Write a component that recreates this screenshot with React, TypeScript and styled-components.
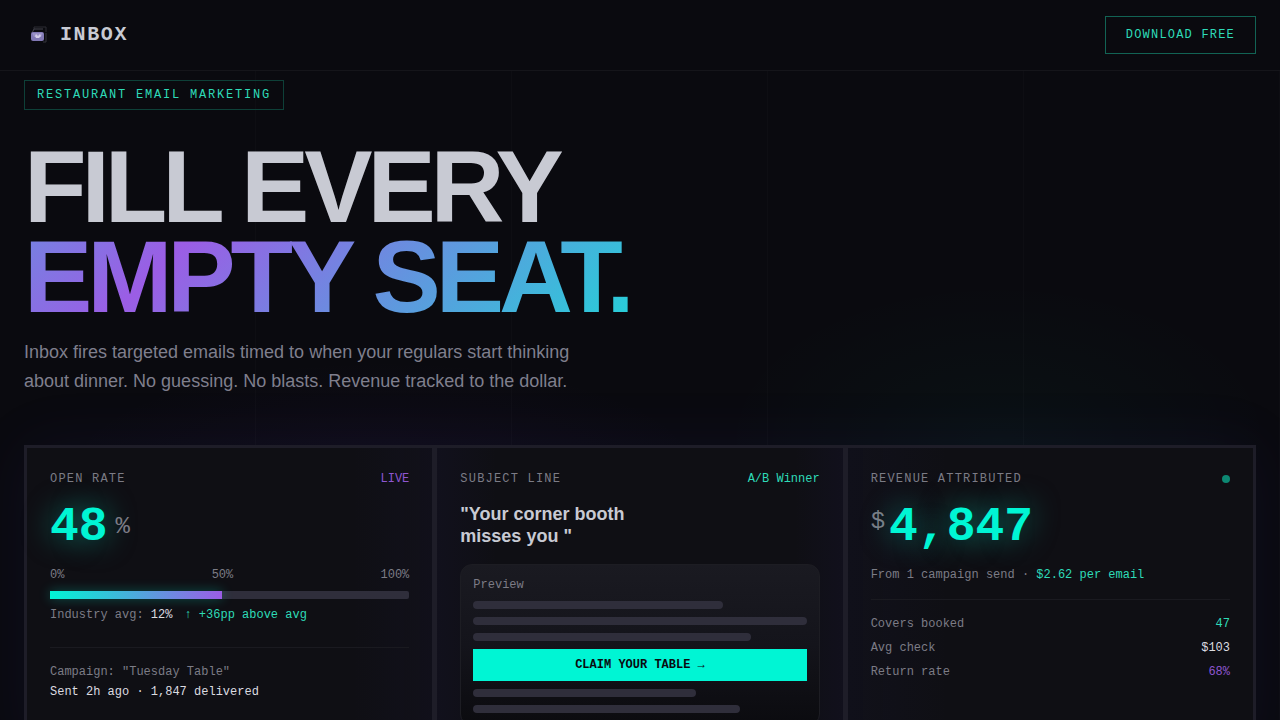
import React from 'react';
import styled, { createGlobalStyle } from 'styled-components';

const mono = '"Liberation Mono", "Courier New", monospace';
const sans = '"Liberation Sans", Arial, sans-serif';

const color = {
  page: '#0a0a0f',
  card: '#0f0f14',
  line: '#1e1d28',
  rule: '#1a1a20',
  track: '#2f2e3b',
  text: '#c8cad3',
  bright: '#dcdce0',
  muted: '#7c7c86',
  cyan: '#00f5d4',
  cyanSoft: '#2edbb8',
  purple: '#9b5de5',
  purpleSoft: '#8e56d0',
};

const GlobalStyle = createGlobalStyle`
  *, *::before, *::after { box-sizing: border-box; }
  body {
    margin: 0;
    background: ${color.page};
    color: ${color.text};
    font-family: ${mono};
    font-size: 12px;
    line-height: 16px;
  }
  h1, h2, p, dl, dd { margin: 0; }
`;

const Page = styled.div`
  min-height: 100vh;
  background:
    repeating-linear-gradient(90deg, transparent 0 calc(20% - 1px), rgba(255, 255, 255, 0.014) calc(20% - 1px) 20%),
    radial-gradient(ellipse 320px 110px at 30% 470px, rgba(120, 60, 200, 0.05), transparent),
    radial-gradient(ellipse 280px 160px at 78% 440px, rgba(0, 245, 180, 0.03), transparent),
    ${color.page};
`;

const Nav = styled.header`
  position: fixed;
  z-index: 1;
  top: 0;
  left: 0;
  right: 0;
  display: flex;
  align-items: center;
  justify-content: space-between;
  padding: 16px 24px;
  border-bottom: 1px solid #15151a;
  background: #0a0a0f;
`;

const Brand = styled.a`
  display: flex;
  align-items: center;
  gap: 8px;
  color: ${color.text};
  font-size: 20px;
  line-height: 24px;
  font-weight: 700;
  letter-spacing: 0.08em;
  text-decoration: none;
`;

const DownloadButton = styled.button`
  padding: 10px 20px;
  border: 1px solid #126354;
  background: transparent;
  color: ${color.cyanSoft};
  font: 12px/16px ${mono};
  letter-spacing: 0.1em;
  cursor: pointer;
`;

const Main = styled.main`
  padding: 80px 24px 48px;
`;

const Hero = styled.section`
  display: flex;
  flex-direction: column;
  align-items: flex-start;
`;

const Tag = styled.p`
  padding: 6px 12px;
  border: 1px solid #0e4038;
  color: ${color.cyanSoft};
  letter-spacing: 0.15em;
`;

const Headline = styled.h1`
  margin-top: 32px;
  font: 700 8vw/90px ${sans};
  letter-spacing: -0.05em;
`;

const Accent = styled.span`
  display: table;
  background: linear-gradient(135deg, ${color.cyan}, ${color.purple}, ${color.cyan}) 79% 50% / 200% 200%;
  -webkit-background-clip: text;
  background-clip: text;
  color: transparent;
`;

const Lead = styled.p`
  max-width: 560px;
  margin-top: 16px;
  color: #7f7f8d;
  font: 18px/29px ${sans};
`;

const Cards = styled.section`
  display: grid;
  grid-template-columns: repeat(3, 1fr);
  gap: 5px;
  margin-top: 49px;
  border: 3px solid ${color.line};
  background: ${color.line};
  box-shadow: 0 0 60px rgba(80, 60, 200, 0.08);
`;

const Card = styled.article<{ $glow: string }>`
  padding: 23px;
  background: ${(p) => p.$glow}, ${color.card};
`;

const CardHead = styled.header`
  display: flex;
  align-items: center;
  justify-content: space-between;
  margin-bottom: 16px;
`;

const Label = styled.h2`
  color: ${color.muted};
  font: 12px/16px ${mono};
  letter-spacing: 0.1em;
`;

const Tone = styled.span<{ $color: string }>`
  color: ${(p) => p.$color};
`;

const StatusDot = styled.span`
  width: 8px;
  height: 8px;
  border-radius: 50%;
  background: #0d8873;
`;

const Figure = styled.div<{ $align: string; $gap: number }>`
  display: flex;
  align-items: ${(p) => p.$align};
  gap: ${(p) => p.$gap}px;
  margin-bottom: 16px;
`;

const Value = styled.strong`
  color: ${color.cyan};
  font-size: 48px;
  line-height: 48px;
  text-shadow: 0 0 30px rgba(0, 245, 212, 0.5);
`;

const Unit = styled.span`
  color: ${color.muted};
  font-size: 24px;
  line-height: 38px;
`;

const Scale = styled.div`
  display: flex;
  justify-content: space-between;
  color: ${color.muted};
`;

const Track = styled.div`
  height: 8px;
  margin: 8px 0;
  border-radius: 2px;
  background: ${color.track};
`;

const Fill = styled.div`
  height: 100%;
  background: linear-gradient(90deg, ${color.cyan}, ${color.purple});
  box-shadow: 0 0 12px rgba(0, 245, 212, 0.3);
`;

const Note = styled.p`
  color: ${color.muted};
`;

const Delta = styled.span`
  margin-left: 12px;
  color: ${color.cyanSoft};
`;

const Campaign = styled.div`
  display: grid;
  gap: 4px;
  margin-top: 24px;
  padding-top: 16px;
  border-top: 1px solid ${color.rule};
`;

const Subject = styled.p`
  margin-bottom: 17px;
  font: 700 18px/22px ${sans};
`;

const Preview = styled.div`
  display: grid;
  gap: 8px;
  padding: 12px;
  border: 1px solid #1d1d23;
  border-radius: 12px;
  background: linear-gradient(180deg, #1a1a21, #14141b 50%, #0b0b0f);
  color: ${color.muted};
`;

const Skeleton = styled.div<{ $width: string }>`
  width: ${(p) => p.$width};
  height: 8px;
  border-radius: 4px;
  background: ${color.track};
`;

const Claim = styled.button`
  padding: 8px;
  border: 0;
  background: ${color.cyan};
  color: ${color.page};
  font: 700 12px/16px ${mono};
  cursor: pointer;
`;

const Metrics = styled.dl`
  display: grid;
  gap: 8px;
  margin-top: 16px;
  padding-top: 16px;
  border-top: 1px solid ${color.rule};
`;

const Metric = styled.div`
  display: flex;
  justify-content: space-between;
  color: ${color.muted};
`;

const MetricValue = styled.dd<{ $color: string }>`
  color: ${(p) => p.$color};
`;

const metrics = [
  { name: 'Covers booked', value: '47', tone: color.cyanSoft },
  { name: 'Avg check', value: '$103', tone: color.bright },
  { name: 'Return rate', value: '68%', tone: color.purpleSoft },
];

const glowRight = 'linear-gradient(90deg, transparent 80%, rgba(60, 40, 180, 0.04))';
const glowBoth = 'linear-gradient(90deg, rgba(60, 40, 180, 0.05), transparent 15% 88%, rgba(60, 40, 180, 0.05))';
const glowLeft = 'linear-gradient(90deg, rgba(50, 50, 180, 0.04), transparent 25%)';

function Logo() {
  return (
    <svg width="28" height="28" viewBox="0 0 28 28" fill="none" aria-hidden="true">
      <path d="M10 8V6h12v5" stroke="#2c2c34" strokeWidth="1" />
      <path d="M8 12l2-4h9" stroke="#43434d" strokeWidth="1" />
      <path d="M22 12v9h-3" stroke="#34343c" strokeWidth="1" />
      <rect x="7" y="11" width="13" height="9" rx="2" fill="#8178b4" />
      <path d="M8 12h11l-2 4h-7z" fill="#9990c6" />
      <path d="M12 13l2 2 2-2 1 2-2 2h-3l-1-2z" fill="#d4cde9" />
    </svg>
  );
}

export default function App() {
  return (
    <Page>
      <GlobalStyle />
      <Nav>
        <Brand href="#">
          <Logo />
          INBOX
        </Brand>
        <DownloadButton type="button">DOWNLOAD FREE</DownloadButton>
      </Nav>
      <Main>
        <Hero>
          <Tag>RESTAURANT EMAIL MARKETING</Tag>
          <Headline>
            FILL EVERY
            <Accent>EMPTY SEAT.</Accent>
          </Headline>
          <Lead>
            Inbox fires targeted emails timed to when your regulars start thinking about dinner. No guessing. No
            blasts. Revenue tracked to the dollar.
          </Lead>
        </Hero>
        <Cards>
          <Card $glow={glowRight}>
            <CardHead>
              <Label>OPEN RATE</Label>
              <Tone $color={color.purpleSoft}>LIVE</Tone>
            </CardHead>
            <Figure $align="center" $gap={8}>
              <Value>48</Value>
              <Unit>%</Unit>
            </Figure>
            <Scale>
              <span>0%</span>
              <span>50%</span>
              <span>100%</span>
            </Scale>
            <Track>
              <Fill style={{ width: '48%' }} />
            </Track>
            <Note>
              Industry avg: <Tone $color={color.bright}>12%</Tone>
              <Delta>↑ +36pp above avg</Delta>
            </Note>
            <Campaign>
              <Note>Campaign: "Tuesday Table"</Note>
              <Tone $color={color.bright}>Sent 2h ago · 1,847 delivered</Tone>
            </Campaign>
          </Card>
          <Card $glow={glowBoth}>
            <CardHead>
              <Label>SUBJECT LINE</Label>
              <Tone $color={color.cyanSoft}>A/B Winner</Tone>
            </CardHead>
            <Subject>
              "Your corner booth
              <br />
              misses you "
            </Subject>
            <Preview>
              <span>Preview</span>
              <Skeleton $width="75%" />
              <Skeleton $width="100%" />
              <Skeleton $width="83.33%" />
              <Claim type="button">CLAIM YOUR TABLE →</Claim>
              <Skeleton $width="66.66%" />
              <Skeleton $width="80%" />
            </Preview>
          </Card>
          <Card $glow={glowLeft}>
            <CardHead>
              <Label>REVENUE ATTRIBUTED</Label>
              <StatusDot />
            </CardHead>
            <Figure $align="flex-start" $gap={4}>
              <Unit>$</Unit>
              <Value>4,847</Value>
            </Figure>
            <Note>
              From 1 campaign send · <Tone $color={color.cyanSoft}>$2.62 per email</Tone>
            </Note>
            <Metrics>
              {metrics.map((m) => (
                <Metric key={m.name}>
                  <dt>{m.name}</dt>
                  <MetricValue $color={m.tone}>{m.value}</MetricValue>
                </Metric>
              ))}
            </Metrics>
          </Card>
        </Cards>
      </Main>
    </Page>
  );
}
